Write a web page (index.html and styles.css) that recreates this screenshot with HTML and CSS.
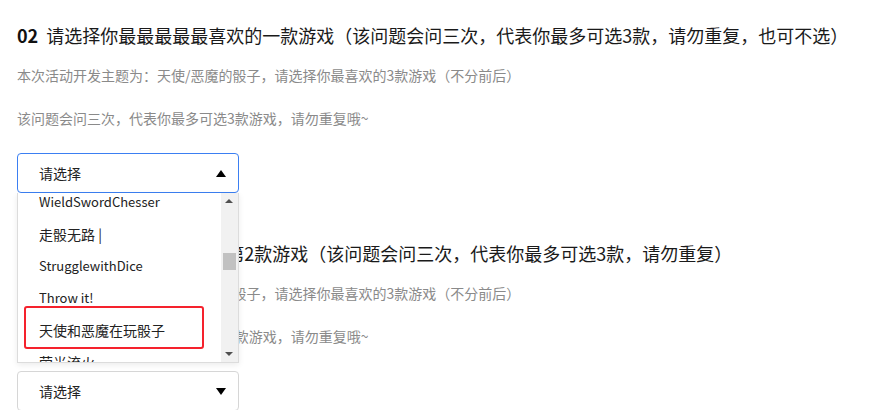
FILE: index.html
```html
<!DOCTYPE html>
<html lang="zh-CN">
<head>
<meta charset="utf-8">
<link rel="stylesheet" href="styles.css">
</head>
<body>
<div class="page">
  <section class="question">
    <h2 class="title"><b class="num">02</b>请选择你最最最最最喜欢的一款游戏（该问题会问三次，代表你最多可选3款，请勿重复，也可不选）</h2>
    <p class="desc first">本次活动开发主题为：天使/恶魔的骰子，请选择你最喜欢的3款游戏（不分前后）</p>
    <p class="desc second">该问题会问三次，代表你最多可选3款游戏，请勿重复哦~</p>
    <div class="select-wrap">
      <div class="select open"><span>请选择</span><i class="tri up"></i></div>
      <div class="dropdown">
        <ul class="items">
          <li class="latin">WieldSwordChesser</li>
          <li>走骰无路 |</li>
          <li class="latin">StrugglewithDice</li>
          <li class="latin">Throw it!</li>
          <li>天使和恶魔在玩骰子</li>
          <li>萤光流火</li>
        </ul>
        <div class="scrollbar">
          <i class="arrow a-up"></i>
          <div class="thumb"></div>
          <i class="arrow a-down"></i>
        </div>
        <div class="mark"></div>
      </div>
    </div>
  </section>
  <section class="question last">
    <h2 class="title"><b class="num">03</b>请选择你最最最喜欢的第2款游戏（该问题会问三次，代表你最多可选3款，请勿重复）</h2>
    <p class="desc first">本次活动开发主题为：天使/恶魔的骰子，请选择你最喜欢的3款游戏（不分前后）</p>
    <p class="desc second">该问题会问三次，代表你最多可选3款游戏，请勿重复哦~</p>
    <div class="select-wrap">
      <div class="select"><span>请选择</span><i class="tri down"></i></div>
    </div>
  </section>
</div>
</body>
</html>
```

FILE: styles.css
```css
* { box-sizing: border-box; }
html, body { margin: 0; padding: 0; background: #fff; }
body {
  font-family: "Noto Sans CJK SC", "Noto Sans", sans-serif;
  color: #222;
  overflow: hidden;
  height: 410px;
}
.page { padding: 21px 17px 0 17px; height: 410px; overflow: hidden; }
.question { height: 218px; }
.question.last { height: 171px; }
.title {
  margin: 0;
  font-size: 18px;
  line-height: 28px;
  font-weight: normal;
  color: #1a1a1a;
  white-space: nowrap;
}
.num { font-weight: bold; margin-right: 8px; color: #111; }
.desc {
  margin: 0;
  font-size: 14px;
  line-height: 20px;
  color: #8a8a8a;
  white-space: nowrap;
}
.desc.first { margin-top: 16px; }
.desc.second { margin-top: 23px; }
.select-wrap { position: relative; width: 222px; margin-top: 25px; }
.select {
  height: 40px;
  border: 1px solid #d6d6d6;
  border-radius: 4px;
  display: flex;
  align-items: center;
  justify-content: space-between;
  padding: 0 12px 0 21px;
  font-size: 14px;
  color: #222;
  background: #fff;
}
.select.open { border-color: #3b7ff2; }
.tri { width: 0; height: 0; border-left: 5px solid transparent; border-right: 5px solid transparent; }
.tri.up { border-bottom: 7px solid #000; }
.tri.down { border-top: 7px solid #000; }
.dropdown {
  position: absolute;
  top: 100%;
  left: 0;
  width: 222px;
  height: 170px;
  border: 1px solid #dcdcdc;
  border-top: none;
  background: #fff;
  box-shadow: 0 2px 6px rgba(0,0,0,0.08);
  overflow: hidden;
  z-index: 5;
}
.items {
  list-style: none;
  margin: -7px 0 0 0;
  padding: 0;
  font-size: 14px;
  color: #222;
}
.items li {
  height: 32px;
  line-height: 32px;
  padding-left: 21px;
  white-space: nowrap;
}
.items li.latin { font-size: 13px; }
.scrollbar {
  position: absolute;
  top: 0;
  right: 0;
  width: 17px;
  height: 100%;
  background: #f1f1f1;
}
.arrow {
  position: absolute;
  left: 4px;
  width: 0; height: 0;
  border-left: 4px solid transparent;
  border-right: 4px solid transparent;
}
.a-up { top: 6px; border-bottom: 4px solid #505050; }
.a-down { bottom: 6px; border-top: 4px solid #505050; }
.thumb {
  position: absolute;
  top: 60px;
  left: 2px;
  width: 13px;
  height: 17px;
  background: #c1c1c1;
}
.mark {
  position: absolute;
  left: 6px;
  top: 113px;
  width: 180px;
  height: 43px;
  border: 2px solid #f5222d;
  border-radius: 3px;
}
```
